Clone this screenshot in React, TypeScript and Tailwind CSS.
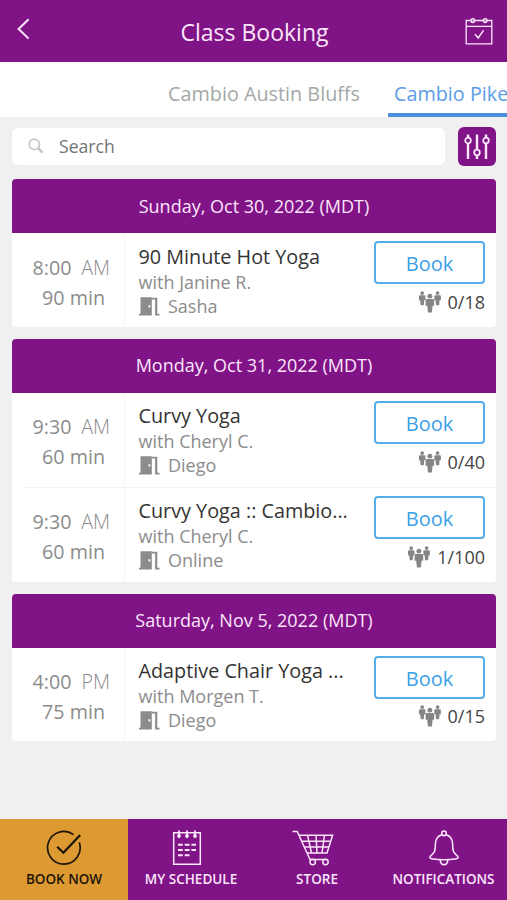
import React from 'react';

const days = [
  {
    date: 'Sunday, Oct 30, 2022 (MDT)',
    classes: [
      { time: '8:00', period: 'AM', duration: '90 min', name: '90 Minute Hot Yoga', teacher: 'Janine R.', room: 'Sasha', spots: '0/18' },
    ],
  },
  {
    date: 'Monday, Oct 31, 2022 (MDT)',
    classes: [
      { time: '9:30', period: 'AM', duration: '60 min', name: 'Curvy Yoga', teacher: 'Cheryl C.', room: 'Diego', spots: '0/40' },
      { time: '9:30', period: 'AM', duration: '60 min', name: 'Curvy Yoga :: Cambio...', teacher: 'Cheryl C.', room: 'Online', spots: '1/100' },
    ],
  },
  {
    date: 'Saturday, Nov 5, 2022 (MDT)',
    classes: [
      { time: '4:00', period: 'PM', duration: '75 min', name: 'Adaptive Chair Yoga ...', teacher: 'Morgen T.', room: 'Diego', spots: '0/15' },
    ],
  },
];

type ClassItem = (typeof days)[number]['classes'][number];

const BackIcon = () => (
  <svg width="14" height="22" viewBox="0 0 14 22" fill="none" stroke="currentColor" strokeWidth="2">
    <path d="M12.6 1.2 2.6 11l10 9.6" />
  </svg>
);

const CalendarCheckIcon = () => (
  <svg width="28" height="28" viewBox="0 0 28 28" fill="none" stroke="currentColor" strokeWidth="1.3">
    <path d="M6 3.5H1.2v23.3h25.6V3.5H22M9.5 3.5h9M1.2 9.3h25.6" />
    <circle cx="7.8" cy="3.6" r="1.9" fill="currentColor" fillOpacity="0.5" />
    <circle cx="20.2" cy="3.6" r="1.9" fill="currentColor" fillOpacity="0.5" />
    <path d="m10 17.2 3.2 3.8 5.3-7.6" strokeWidth="1.5" />
  </svg>
);

const SearchIcon = () => (
  <svg width="16" height="16" viewBox="0 0 16 16" fill="none" stroke="currentColor">
    <circle cx="6.3" cy="6.3" r="5.2" strokeWidth="1.6" />
    <path d="m10.2 10.2 4.4 4.4" strokeWidth="2.6" />
  </svg>
);

const FilterIcon = () => (
  <svg width="26" height="26" viewBox="0 0 26 26" fill="none" stroke="currentColor" strokeWidth="2.4">
    <path d="M4 .5v3.2M4 9.3V25M13 .5v15.2M13 21.3V25M22 .5v3.2M22 9.3V25" />
    <circle cx="4" cy="6.5" r="2.8" strokeWidth="1.8" />
    <circle cx="13" cy="18.5" r="2.8" strokeWidth="1.8" />
    <circle cx="22" cy="6.5" r="2.8" strokeWidth="1.8" />
  </svg>
);

const DoorIcon = () => (
  <svg width="21" height="19" viewBox="0 0 21 19" fill="currentColor">
    <path fillRule="evenodd" d="M1.5.3h11.3v18.2H0v-1.8h1.500zM9.5 8.2v2.2h1.800V8.200z" />
    <path d="M12.800.7h5.500v16h2.200v1.800h-4.400V2.500h-3.300z" />
  </svg>
);

const Person = ({ x, y, s }: { x: number; y: number; s: number }) => (
  <g transform={`translate(${x} ${y}) scale(${s})`}>
    <circle cx="0" cy="2.4" r="2.5" />
    <path d="M-3 5.2h6q1.400 0 1.400 1.400v4.800q0 .9-.8.9t-.8-.4L2 19H-2l-.8-7.100q0 .4-.8.4t-.8-.9V6.600q0-1.400 1.400-1.400z" />
  </g>
);

const PeopleIcon = () => (
  <svg width="24" height="22" viewBox="0 0 24 22" fill="currentColor">
    <Person x={4.2} y={0.3} s={0.74} />
    <Person x={19.6} y={0.3} s={0.74} />
    <Person x={11.9} y={2.8} s={0.98} />
  </svg>
);

const BookIcon = () => (
  <svg width="36" height="36" viewBox="0 0 36 36" fill="none" stroke="currentColor" strokeWidth="1.7">
    <path d="M27.5 4.6A16.300 16.300 0 1 0 33.300 12.500" />
    <path d="m11.2 16.8 6.2 6L34.2 5" strokeWidth="2.2" />
  </svg>
);

const ScheduleIcon = () => (
  <svg width="30" height="36" viewBox="0 0 30 36" fill="none" stroke="currentColor" strokeWidth="1.5">
    <path d="M1.7 2.700h26.600v31.600H1.700z" />
    <path d="M7 .5v7M15 .5v7M23 .5v7" strokeWidth="1.8" />
    <g fill="currentColor" stroke="none">
      <circle cx="7" cy="6" r="1.9" />
      <circle cx="15" cy="6" r="1.9" />
      <circle cx="23" cy="6" r="1.9" />
    </g>
    <path d="M6 14.800h18M6 20h18M6 25.200h11.500" strokeWidth="2" strokeDasharray="4.8 1.9" />
  </svg>
);

const CartIcon = () => (
  <svg width="42" height="36" viewBox="0 0 42 36" fill="none" stroke="currentColor" strokeWidth="1.5">
    <path d="M.5 1.500h4.700L18 29.500h16.500" />
    <path d="M7 5.200h33.600L35 23H15M9.800 11.200h28.800M12.500 17h24.200" />
    <path d="m15.500 5.200 4 17.800M24 5.200l1 17.800M32.500 5.200 30 23" />
    <circle cx="20.700" cy="32" r="2.700" />
    <circle cx="33.500" cy="32" r="2.700" />
  </svg>
);

const BellIcon = () => (
  <svg width="30" height="36" viewBox="0 0 30 36" fill="none" stroke="currentColor" strokeWidth="1.6">
    <circle cx="15" cy="3.3" r="2.3" />
    <path d="M13 4.800C8.500 6 6.400 9.500 6.400 14c0 7-.6 8.500-4.800 12-1.300 1.200-.5 2.600 1 2.800 8 1.200 16.800 1.200 24.800 0 1.500-.2 2.300-1.600 1-2.800-4.200-3.500-4.800-5-4.800-12 0-4.500-2.100-8-6.600-9.200" />
    <path d="M11.300 29.700c0 6.600 7.400 6.600 7.400 0" />
  </svg>
);

const ClassRow = ({ item }: { item: ClassItem }) => (
  <div className="flex h-[93.6px]">
    <div className="flex w-[113px] flex-col border-r border-[#f3f3f3] pt-[19.2px] text-[19.7px] leading-[30px] text-[#8c8c8c]">
      <div className="flex justify-between pr-[14px] pl-[20.5px]">
        <span>{item.time}</span>
        <span className="font-light">{item.period}</span>
      </div>
      <div className="pr-[19px] text-right">{item.duration}</div>
    </div>
    <div className="flex-1 pt-[9.2px] pl-[13.5px] whitespace-nowrap">
      <h3 className="text-[19.8px] leading-[27px] text-[#333]">{item.name}</h3>
      <p className="text-[18px] leading-[24px] text-[#8c8c8c]">with {item.teacher}</p>
      <div className="flex items-center gap-[8.5px] text-[18px] leading-[25px] text-[#8c8c8c]">
        <DoorIcon />
        {item.room}
      </div>
    </div>
    <div className="flex w-[122px] flex-col items-end pt-[8px] pr-[11px]">
      <button className="h-[43px] w-[111px] rounded-[4px] border-2 border-[#55adeb] pt-[2px] text-[20px] leading-[27px] text-[#3a9fe6]">Book</button>
      <div className="mt-[5.6px] flex items-center gap-[6px] text-[18px] leading-[24px] text-[#444]">
        <span className="text-[#858585]"><PeopleIcon /></span>
        {item.spots}
      </div>
    </div>
  </div>
);

const tabs = [
  { label: 'BOOK NOW', icon: <BookIcon />, style: 'w-[128px] bg-[#dd9a33] text-[#1c1408]', shift: '' },
  { label: 'MY SCHEDULE', icon: <ScheduleIcon />, style: 'w-[126px]', shift: 'mr-[8px]' },
  { label: 'STORE', icon: <CartIcon />, style: 'w-[126px]', shift: 'mr-[9px]' },
  { label: 'NOTIFICATIONS', icon: <BellIcon />, style: 'w-[127px]', shift: '' },
];

const App: React.FC = () => {
  return (
    <div className="flex h-[900px] w-[507px] flex-col overflow-hidden bg-[#f0f0f0] font-['Open_Sans',sans-serif]">
      <header className="flex h-[62px] items-center justify-between bg-[#801386] pr-[14px] pl-[16px] text-[#fbe6fb]">
        <button className="mb-[5px] w-[28px]"><BackIcon /></button>
        <h1 className="pt-[2px] text-[23px] leading-[33px]">Class Booking</h1>
        <button><CalendarCheckIcon /></button>
      </header>

      <nav className="flex h-[55px] shrink-0 justify-end bg-white text-[19.8px] whitespace-nowrap">
        <div className="pt-[17px] pr-[28px] leading-[30px] text-[#a3a8a6]">Cambio Austin Bluffs</div>
        <div className="w-[119px] shrink-0 border-b-4 border-[#4a8fd8] pt-[17px] pl-[6px] leading-[30px] text-[#5a9ce6]">Cambio Pike</div>
      </nav>

      <div className="flex items-center justify-between pt-[10px] pr-[11px] pl-[12px]">
        <div className="flex h-[37px] w-[433px] items-center gap-[15px] rounded-[6px] bg-white pb-px pl-[16px] text-[17.6px] text-[#737373]">
          <span className="text-[#c4c4c4]"><SearchIcon /></span>
          Search
        </div>
        <button className="flex h-[39px] w-[38px] items-center justify-center rounded-[6px] bg-[#801386] text-[#fbe6fb]">
          <FilterIcon />
        </button>
      </div>

      <main className="flex flex-1 flex-col gap-[12px] pt-[13.4px] pr-[11px] pl-[12px]">
        {days.map((day) => (
          <section key={day.date} className="overflow-hidden rounded-[4px] bg-white">
            <h2 className="flex h-[54px] items-center justify-center bg-[#801386] text-[18px] text-[#fbe6fb]">{day.date}</h2>
            {day.classes.map((item, i) => (
              <React.Fragment key={i}>
                {i > 0 && <div className="ml-[10px] h-[1.4px] bg-[#f1f1f1]" />}
                <ClassRow item={item} />
              </React.Fragment>
            ))}
          </section>
        ))}
      </main>

      <footer className="flex h-[81px] shrink-0 bg-[#801386] text-[#fbe6fb]">
        {tabs.map((tab) => (
          <div key={tab.label} className={`flex flex-col items-center pt-[11px] text-[13.5px] font-semibold whitespace-nowrap ${tab.style}`}>
            <span className={tab.shift}>{tab.icon}</span>
            <span className="mt-[4px] leading-[18px]">{tab.label}</span>
          </div>
        ))}
      </footer>
    </div>
  );
};

export default App;
